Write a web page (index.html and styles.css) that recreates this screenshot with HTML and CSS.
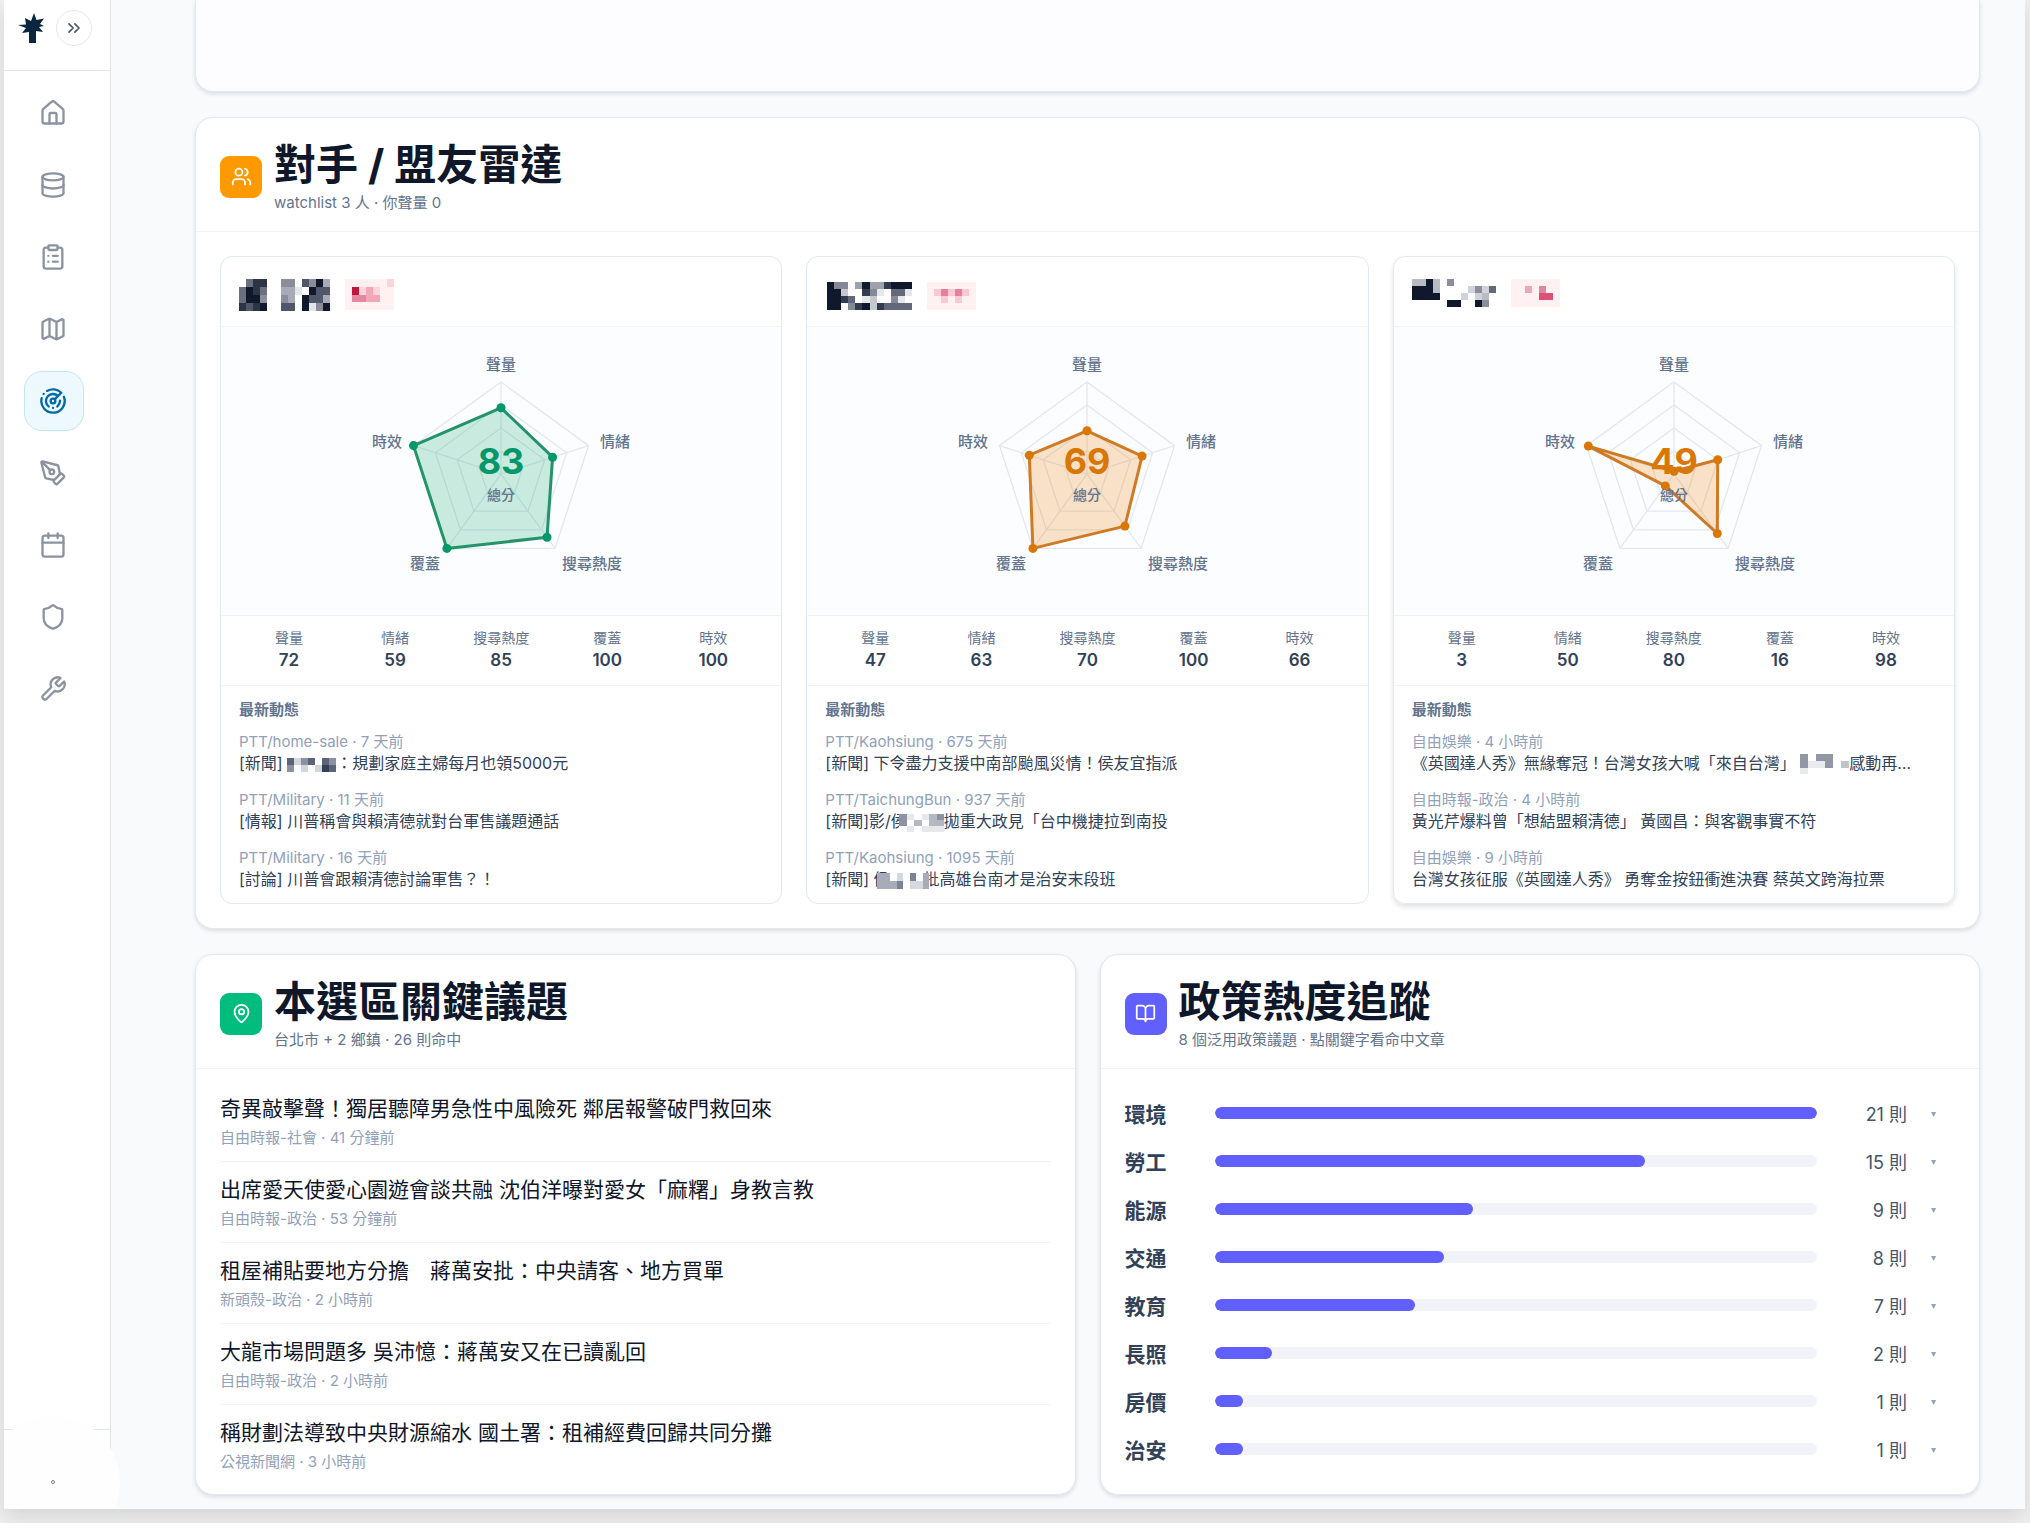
FILE: index.html
```html
<!DOCTYPE html>
<html lang="zh-Hant">

<head>
    <title>選情雷達</title>
    <meta charset="UTF-8">
    <meta name="viewport" content="width=device-width, initial-scale=1">
    <link rel="stylesheet" href="styles.css">
</head>

<body>
    <!-- shared radar grid, drawn around 0,0 with radius 92 -->
    <svg class="defs" width="0" height="0">
        <symbol id="grid" viewBox="-150 -144 300 288" overflow="visible">
            <polygon points="0,-92 87.5,-28.4 54.1,74.4 -54.1,74.4 -87.5,-28.4" />
            <polygon points="0,-69 65.6,-21.3 40.6,55.8 -40.6,55.8 -65.6,-21.3" />
            <polygon points="0,-46 43.7,-14.2 27,37.2 -27,37.2 -43.7,-14.2" />
            <polygon points="0,-23 21.9,-7.1 13.5,18.6 -13.5,18.6 -21.9,-7.1" />
            <path d="M0 0V-92M0 0L87.5-28.4M0 0L54.1 74.4M0 0L-54.1 74.4M0 0L-87.5-28.4" />
        </symbol>
    </svg>

    <div class="window">
        <aside class="sidebar">
            <div class="side-top">
                <svg class="logo" viewBox="0 0 26 30">
                    <path d="M11 30V19L4 20 8 15 0 12 8 11.500 7 5 13 8 16 0 18.500 7 26 5.500 22 11 26 13 21 14 25 19 18 18V30z" />
                </svg>
                <button class="toggle" aria-label="展開">
                    <svg class="icon" viewBox="0 0 24 24"><path d="m6 17 5-5-5-5M13 17l5-5-5-5" /></svg>
                </button>
            </div>
            <nav class="nav">
                <a href="#" class="nav-link" aria-label="首頁">
                    <svg class="icon" viewBox="0 0 24 24"><path d="M15 21v-8a1 1 0 0 0-1-1h-4a1 1 0 0 0-1 1v8" /><path d="M3 10a2 2 0 0 1 .709-1.528l7-6a2 2 0 0 1 2.582 0l7 6A2 2 0 0 1 21 10v9a2 2 0 0 1-2 2H5a2 2 0 0 1-2-2z" /></svg>
                </a>
                <a href="#" class="nav-link" aria-label="資料庫">
                    <svg class="icon" viewBox="0 0 24 24"><ellipse cx="12" cy="5" rx="9" ry="3" /><path d="M3 5v14a9 3 0 0 0 18 0V5" /><path d="M3 12a9 3 0 0 0 18 0" /></svg>
                </a>
                <a href="#" class="nav-link" aria-label="任務">
                    <svg class="icon" viewBox="0 0 24 24"><rect width="8" height="4" x="8" y="2" rx="1" /><path d="M16 4h2a2 2 0 0 1 2 2v14a2 2 0 0 1-2 2H6a2 2 0 0 1-2-2V6a2 2 0 0 1 2-2h2M12 11h4M12 16h4M8 11h.01M8 16h.01" /></svg>
                </a>
                <a href="#" class="nav-link" aria-label="地圖">
                    <svg class="icon" viewBox="0 0 24 24"><path d="M14.106 5.553a2 2 0 0 0 1.788 0l3.659-1.83A1 1 0 0 1 21 4.619v12.764a1 1 0 0 1-.553.894l-4.553 2.277a2 2 0 0 1-1.788 0l-4.212-2.106a2 2 0 0 0-1.788 0l-3.659 1.83A1 1 0 0 1 3 19.381V6.618a1 1 0 0 1 .553-.894l4.553-2.277a2 2 0 0 1 1.788 0zM15 5.764v15M9 3.236v15" /></svg>
                </a>
                <a href="#" class="nav-link active" aria-label="雷達">
                    <svg class="icon" viewBox="0 0 24 24"><path d="M19.07 4.93A10 10 0 0 0 6.99 3.34M4 6h.01M2.29 9.62A10 10 0 1 0 21.31 8.35M16.24 7.76A6 6 0 1 0 8.23 16.67M12 18h.01M17.99 11.66A6 6 0 0 1 15.77 16.67M13.41 10.59l5.66-5.66" /><circle cx="12" cy="12" r="2" /></svg>
                </a>
                <a href="#" class="nav-link" aria-label="文案">
                    <svg class="icon" viewBox="0 0 24 24"><path d="M15.707 21.293a1 1 0 0 1-1.414 0l-1.586-1.586a1 1 0 0 1 0-1.414l5.586-5.586a1 1 0 0 1 1.414 0l1.586 1.586a1 1 0 0 1 0 1.414z" /><path d="m18 13-1.375-6.874a1 1 0 0 0-.746-.776L3.235 2.028a1 1 0 0 0-1.207 1.207L5.35 15.879a1 1 0 0 0 .776.746L13 18M2.3 2.3l7.286 7.286" /><circle cx="11" cy="11" r="2" /></svg>
                </a>
                <a href="#" class="nav-link" aria-label="行程">
                    <svg class="icon" viewBox="0 0 24 24"><path d="M8 2v4M16 2v4M3 10h18" /><rect width="18" height="18" x="3" y="4" rx="2" /></svg>
                </a>
                <a href="#" class="nav-link" aria-label="防護">
                    <svg class="icon" viewBox="0 0 24 24"><path d="M20 13c0 5-3.5 7.5-7.66 8.95a1 1 0 0 1-.67-.01C7.5 20.5 4 18 4 13V6a1 1 0 0 1 1-1c2 0 4.5-1.2 6.24-2.72a1.17 1.17 0 0 1 1.52 0C14.51 3.81 17 5 19 5a1 1 0 0 1 1 1z" /></svg>
                </a>
                <a href="#" class="nav-link" aria-label="工具">
                    <svg class="icon" viewBox="0 0 24 24"><path d="M14.7 6.3a1 1 0 0 0 0 1.4l1.6 1.6a1 1 0 0 0 1.4 0l3.77-3.77a6 6 0 0 1-7.94 7.94l-6.91 6.91a2.12 2.12 0 0 1-3-3l6.91-6.91a6 6 0 0 1 7.94-7.94l-3.76 3.76z" /></svg>
                </a>
            </nav>
            <div class="side-bottom">
                <span class="dot"></span>
            </div>
        </aside>

        <main class="main">
            <section class="card card-prev"></section>

            <section class="card">
                <header class="card-head">
                    <span class="badge orange">
                        <svg class="icon" viewBox="0 0 24 24"><path d="M16 21v-2a4 4 0 0 0-4-4H6a4 4 0 0 0-4 4v2M22 21v-2a4 4 0 0 0-3-3.87M16 3.13a4 4 0 0 1 0 7.75" /><circle cx="9" cy="7" r="4" /></svg>
                    </span>
                    <div>
                        <h2>對手 / 盟友雷達</h2>
                        <p class="sub">watchlist 3 人 · 你聲量 0</p>
                    </div>
                </header>
                <div class="rivals">
                    <article class="rival">
                        <div class="rival-head">
                            <svg class="mosaic" width="91" height="32" viewBox="0 0 13 4" preserveAspectRatio="none">
                                <path fill="#10182c" d="M11 0h1v1h-1zM1 1h1v1h-1zM10 1h1v1h-1zM1 2h2v1h-2zM9 2h1v2h-1zM3 3h1v1h-1zM12 3h1v1h-1z" />
                                <path fill="#2c3446" d="M2 0h2v1h-2zM2 1h1v1h-1zM0 3h1v1h-1zM2 3h1v1h-1z" />
                                <path fill="#50576a" d="M9 0h1v1h-1zM11 1h2v1h-2zM10 2h2v1h-2zM1 3h1v1h-1zM6 3h2v1h-2z" />
                                <path fill="#6b7080" d="M1 0h1v1h-1zM0 1h1v2h-1zM3 1h1v1h-1z" />
                                <path fill="#8b8e9a" d="M6 0h2v1h-2zM10 0h1v1h-1zM3 2h1v1h-1zM6 2h1v1h-1zM11 3h1v1h-1z" />
                                <path fill="#a8abb6" d="M12 0h1v1h-1zM6 1h2v1h-2zM7 2h1v1h-1zM12 2h1v1h-1z" />
                                <path fill="#e4e5ea" d="M8 1h1v1h-1zM10 3h1v1h-1z" />
                            </svg>
                            <svg class="mosaic tag" width="49" height="31" viewBox="0 0 7 4" preserveAspectRatio="none">
                                <path fill="#c0183c" d="M1 1h1v1h-1z" />
                                <path fill="#e288a0" d="M1 2h2v1h-2z" />
                                <path fill="#f2a6b6" d="M3 1h1v2h-1zM4 2h1v1h-1z" />
                                <path fill="#fcd4dc" d="M2 1h1v1h-1zM4 1h1v1h-1zM6 0h1v1h-1z" />
                            </svg>
                        </div>
                        <div class="radar green">
                            <svg width="300" height="288" viewBox="-150 -147 300 288">
                                <use href="#grid" x="-150" y="-144" width="300" height="288" class="grid" />
                                <polygon class="area" points="0,-66.2 51.6,-16.8 46,63.3 -54.1,74.4 -87.5,-28.4" />
                                <g class="dots">
                                    <circle cx="0" cy="-66.2" r="4.5" /><circle cx="51.6" cy="-16.8" r="4.5" /><circle cx="46" cy="63.3" r="4.5" /><circle cx="-54.1" cy="74.4" r="4.5" /><circle cx="-87.5" cy="-28.4" r="4.5" />
                                </g>
                                <g class="axis">
                                    <text x="0" y="-104" text-anchor="middle">聲量</text>
                                    <text x="99" y="-27">情緒</text>
                                    <text x="61" y="95">搜尋熱度</text>
                                    <text x="-61" y="95" text-anchor="end">覆蓋</text>
                                    <text x="-99" y="-27" text-anchor="end">時效</text>
                                </g>
                                <text class="score" x="0" y="0">83</text>
                                <text class="score-label" x="0" y="26">總分</text>
                            </svg>
                        </div>
                        <dl class="stats">
                            <div><dt>聲量</dt><dd>72</dd></div>
                            <div><dt>情緒</dt><dd>59</dd></div>
                            <div><dt>搜尋熱度</dt><dd>85</dd></div>
                            <div><dt>覆蓋</dt><dd>100</dd></div>
                            <div><dt>時效</dt><dd>100</dd></div>
                        </dl>
                        <div class="news">
                            <h3>最新動態</h3>
                            <ul>
                                <li>
                                    <p class="meta">PTT/home-sale · 7 天前</p>
                                    <a href="#">[新聞] <svg class="blur" width="49" height="14" viewBox="0 0 7 2" preserveAspectRatio="none"><path fill="#5b6478" d="M0 0h1v1h-1zM3 0h1v1h-1zM5 0h1v1h-1zM6 1h1v1h-1z" /><path fill="#8a91a0" d="M0 1h1v1h-1zM2 0h1v1h-1zM6 0h1v1h-1z" /><path fill="#d3d6dc" d="M1 0h1v1h-1zM2 1h1v1h-1zM4 1h1v1h-1z" /><path fill="#334158" d="M5 1h1v1h-1z" /></svg>：規劃家庭主婦每月也領5000元</a>
                                </li>
                                <li>
                                    <p class="meta">PTT/Military · 11 天前</p>
                                    <a href="#">[情報] 川普稱會與賴清德就對台軍售議題通話</a>
                                </li>
                                <li>
                                    <p class="meta">PTT/Military · 16 天前</p>
                                    <a href="#">[討論] 川普會跟賴清德討論軍售？！</a>
                                </li>
                            </ul>
                        </div>
                    </article>

                    <article class="rival">
                        <div class="rival-head low">
                            <svg class="mosaic" width="85" height="28" viewBox="0 0 12 4" preserveAspectRatio="none">
                                <path fill="#10182c" d="M0 0h1v4h-1zM5 0h1v1h-1zM9 0h3v1h-3zM1 1h1v3h-1zM5 3h1v1h-1z" />
                                <path fill="#333b4e" d="M8 0h1v1h-1zM5 1h1v1h-1zM2 2h1v1h-1zM4 3h1v1h-1zM7 3h1v1h-1z" />
                                <path fill="#636979" d="M9 1h2v1h-2zM3 2h1v1h-1zM8 3h4v1h-4z" />
                                <path fill="#858995" d="M1 0h2v1h-2zM6 1h1v1h-1zM9 2h1v1h-1zM3 3h1v1h-1z" />
                                <path fill="#9fa2ad" d="M4 0h1v1h-1zM6 0h2v1h-2z" />
                                <path fill="#c6c8d0" d="M2 1h1v1h-1zM6 2h1v2h-1z" />
                                <path fill="#e6e7eb" d="M7 1h1v1h-1zM11 1h1v1h-1zM5 2h1v1h-1zM10 2h1v1h-1z" />
                            </svg>
                            <svg class="mosaic tag" width="49" height="28" viewBox="0 0 7 4" preserveAspectRatio="none">
                                <path fill="#fcc8d6" d="M1 1h5v1h-5zM2 2h1v1h-1zM4 2h1v1h-1z" />
                                <path fill="#e6809f" d="M2 1h1v1h-1zM4 1h1v1h-1z" />
                            </svg>
                        </div>
                        <div class="radar amber">
                            <svg width="300" height="288" viewBox="-150 -147 300 288">
                                <use href="#grid" x="-150" y="-144" width="300" height="288" class="grid" />
                                <polygon class="area" points="0,-43.2 55.1,-17.9 37.9,52.1 -54.1,74.4 -57.7,-18.8" />
                                <g class="dots">
                                    <circle cx="0" cy="-43.2" r="4.5" /><circle cx="55.1" cy="-17.9" r="4.5" /><circle cx="37.9" cy="52.1" r="4.5" /><circle cx="-54.1" cy="74.4" r="4.5" /><circle cx="-57.7" cy="-18.8" r="4.5" />
                                </g>
                                <g class="axis">
                                    <text x="0" y="-104" text-anchor="middle">聲量</text>
                                    <text x="99" y="-27">情緒</text>
                                    <text x="61" y="95">搜尋熱度</text>
                                    <text x="-61" y="95" text-anchor="end">覆蓋</text>
                                    <text x="-99" y="-27" text-anchor="end">時效</text>
                                </g>
                                <text class="score" x="0" y="0">69</text>
                                <text class="score-label" x="0" y="26">總分</text>
                            </svg>
                        </div>
                        <dl class="stats">
                            <div><dt>聲量</dt><dd>47</dd></div>
                            <div><dt>情緒</dt><dd>63</dd></div>
                            <div><dt>搜尋熱度</dt><dd>70</dd></div>
                            <div><dt>覆蓋</dt><dd>100</dd></div>
                            <div><dt>時效</dt><dd>66</dd></div>
                        </dl>
                        <div class="news">
                            <h3>最新動態</h3>
                            <ul>
                                <li>
                                    <p class="meta">PTT/Kaohsiung · 675 天前</p>
                                    <a href="#">[新聞] 下令盡力支援中南部颱風災情！侯友宜指派</a>
                                </li>
                                <li>
                                    <p class="meta">PTT/TaichungBun · 937 天前</p>
                                    <a href="#">[新聞]影/侯<svg class="blur over" width="45" height="18" viewBox="0 0 6 3" preserveAspectRatio="none"><path fill="#fff" d="M0 0h6v3H0z" /><path fill="#8d93a2" d="M0 0h1v2h-1zM5 0h1v1h-1z" /><path fill="#b4b8c2" d="M2 1h1v1h-1zM4 0h1v2h-1zM5 1h1v1h-1z" /><path fill="#e6e8ec" d="M1 0h1v1h-1zM3 0h1v1h-1zM1 2h1v1h-1zM3 2h3v1h-3z" /></svg>拋重大政見「台中機捷拉到南投</a>
                                </li>
                                <li>
                                    <p class="meta">PTT/Kaohsiung · 1095 天前</p>
                                    <a href="#">[新聞] 侯<svg class="blur over-both" width="52" height="16" viewBox="0 0 8 2" preserveAspectRatio="none"><path fill="#fff" d="M0 0h8v2H0z" /><path fill="#a7acb8" d="M0 0h2v2h-2zM2 1h1v1h-1zM7 0h1v2h-1z" /><path fill="#7c8394" d="M3 1h1v1h-1zM5 0h1v1h-1z" /><path fill="#d5d8de" d="M3 0h1v1h-1zM5 1h2v1h-2z" /></svg>批高雄台南才是治安末段班</a>
                                </li>
                            </ul>
                        </div>
                    </article>

                    <article class="rival raised">
                        <div class="rival-head">
                            <svg class="mosaic" width="84" height="28" viewBox="0 0 12 4" preserveAspectRatio="none">
                                <path fill="#10182c" d="M2 0h1v1h-1zM0 1h3v1h-3zM0 2h4v1h-4zM5 3h2v1h-2zM9 3h1v1h-1z" />
                                <path fill="#b8bac4" d="M0 0h2v1h-2zM3 0h1v2h-1zM10 2h1v1h-1z" />
                                <path fill="#8b8e9a" d="M5 0h1v1h-1zM9 1h1v1h-1zM10 3h1v1h-1z" />
                                <path fill="#636979" d="M11 1h1v1h-1z" />
                                <path fill="#d0d2d9" d="M8 1h1v1h-1zM10 1h1v1h-1zM7 2h1v1h-1zM9 2h1v1h-1z" />
                            </svg>
                            <svg class="mosaic tag" width="49" height="28" viewBox="0 0 7 4" preserveAspectRatio="none">
                                <path fill="#e8a8bc" d="M2 1h1v1h-1z" />
                                <path fill="#e086a2" d="M4 1h1v1h-1z" />
                                <path fill="#dc5078" d="M4 2h2v1h-2z" />
                            </svg>
                        </div>
                        <div class="radar amber">
                            <svg width="300" height="288" viewBox="-150 -147 300 288">
                                <use href="#grid" x="-150" y="-144" width="300" height="288" class="grid" />
                                <polygon class="area" points="0,-2.8 43.7,-14.2 43.3,59.5 -8.7,11.9 -85.7,-27.9" />
                                <g class="dots">
                                    <circle cx="0" cy="-2.8" r="4.5" /><circle cx="43.7" cy="-14.2" r="4.5" /><circle cx="43.3" cy="59.5" r="4.5" /><circle cx="-8.7" cy="11.9" r="4.5" /><circle cx="-85.7" cy="-27.9" r="4.5" />
                                </g>
                                <g class="axis">
                                    <text x="0" y="-104" text-anchor="middle">聲量</text>
                                    <text x="99" y="-27">情緒</text>
                                    <text x="61" y="95">搜尋熱度</text>
                                    <text x="-61" y="95" text-anchor="end">覆蓋</text>
                                    <text x="-99" y="-27" text-anchor="end">時效</text>
                                </g>
                                <text class="score" x="0" y="0">49</text>
                                <text class="score-label" x="0" y="26">總分</text>
                            </svg>
                        </div>
                        <dl class="stats">
                            <div><dt>聲量</dt><dd>3</dd></div>
                            <div><dt>情緒</dt><dd>50</dd></div>
                            <div><dt>搜尋熱度</dt><dd>80</dd></div>
                            <div><dt>覆蓋</dt><dd>16</dd></div>
                            <div><dt>時效</dt><dd>98</dd></div>
                        </dl>
                        <div class="news">
                            <h3>最新動態</h3>
                            <ul>
                                <li>
                                    <p class="meta">自由娛樂 · 4 小時前</p>
                                    <a href="#">《英國達人秀》無緣奪冠！台灣女孩大喊「來自台灣」 <svg class="blur" width="49" height="21" viewBox="0 0 6 3" preserveAspectRatio="none"><path fill="#9297a5" d="M0 0h1v2h-1zM2 0h2v1h-2zM3 1h1v1h-1z" /><path fill="#c0c4cc" d="M5 1h1v1h-1z" /><path fill="#e8eaee" d="M0 2h1v1h-1zM1 1h2v1h-2z" /></svg>感動再…</a>
                                </li>
                                <li>
                                    <p class="meta">自由時報-政治 · 4 小時前</p>
                                    <a href="#">黃光芹爆料曾「想結盟賴清德」 黃國昌：與客觀事實不符</a>
                                </li>
                                <li>
                                    <p class="meta">自由娛樂 · 9 小時前</p>
                                    <a href="#">台灣女孩征服《英國達人秀》 勇奪金按鈕衝進決賽 蔡英文跨海拉票</a>
                                </li>
                            </ul>
                        </div>
                    </article>
                </div>
            </section>

            <div class="two-cols">
                <section class="card">
                    <header class="card-head">
                        <span class="badge emerald">
                            <svg class="icon" viewBox="0 0 24 24"><path d="M20 10c0 4.993-5.539 10.193-7.399 11.799a1 1 0 0 1-1.202 0C9.539 20.193 4 14.993 4 10a8 8 0 0 1 16 0" /><circle cx="12" cy="10" r="3" /></svg>
                        </span>
                        <div>
                            <h2>本選區關鍵議題</h2>
                            <p class="sub">台北市 + 2 鄉鎮 · 26 則命中</p>
                        </div>
                    </header>
                    <ul class="issues">
                        <li>
                            <a href="#">奇異敲擊聲！獨居聽障男急性中風險死 鄰居報警破門救回來</a>
                            <p class="meta">自由時報-社會 · 41 分鐘前</p>
                        </li>
                        <li>
                            <a href="#">出席愛天使愛心園遊會談共融 沈伯洋曝對愛女「麻糬」身教言教</a>
                            <p class="meta">自由時報-政治 · 53 分鐘前</p>
                        </li>
                        <li>
                            <a href="#">租屋補貼要地方分擔　蔣萬安批：中央請客、地方買單</a>
                            <p class="meta">新頭殼-政治 · 2 小時前</p>
                        </li>
                        <li>
                            <a href="#">大龍市場問題多 吳沛憶：蔣萬安又在已讀亂回</a>
                            <p class="meta">自由時報-政治 · 2 小時前</p>
                        </li>
                        <li>
                            <a href="#">稱財劃法導致中央財源縮水 國土署：租補經費回歸共同分攤</a>
                            <p class="meta">公視新聞網 · 3 小時前</p>
                        </li>
                    </ul>
                </section>

                <section class="card">
                    <header class="card-head">
                        <span class="badge indigo">
                            <svg class="icon" viewBox="0 0 24 24"><path d="M12 7v14M3 18a1 1 0 0 1-1-1V4a1 1 0 0 1 1-1h5a4 4 0 0 1 4 4 4 4 0 0 1 4-4h5a1 1 0 0 1 1 1v13a1 1 0 0 1-1 1h-6a3 3 0 0 0-3 3 3 3 0 0 0-3-3z" /></svg>
                        </span>
                        <div>
                            <h2>政策熱度追蹤</h2>
                            <p class="sub">8 個泛用政策議題 · 點關鍵字看命中文章</p>
                        </div>
                    </header>
                    <div class="policies">
                        <button class="policy"><b>環境</b><span class="track"><span class="fill" style="width: 100%"></span></span><span class="count">21 則</span><span class="arrow">▾</span></button>
                        <button class="policy"><b>勞工</b><span class="track"><span class="fill" style="width: 71.4%"></span></span><span class="count">15 則</span><span class="arrow">▾</span></button>
                        <button class="policy"><b>能源</b><span class="track"><span class="fill" style="width: 42.9%"></span></span><span class="count">9 則</span><span class="arrow">▾</span></button>
                        <button class="policy"><b>交通</b><span class="track"><span class="fill" style="width: 38.1%"></span></span><span class="count">8 則</span><span class="arrow">▾</span></button>
                        <button class="policy"><b>教育</b><span class="track"><span class="fill" style="width: 33.3%"></span></span><span class="count">7 則</span><span class="arrow">▾</span></button>
                        <button class="policy"><b>長照</b><span class="track"><span class="fill" style="width: 9.5%"></span></span><span class="count">2 則</span><span class="arrow">▾</span></button>
                        <button class="policy"><b>房價</b><span class="track"><span class="fill" style="width: 4.8%"></span></span><span class="count">1 則</span><span class="arrow">▾</span></button>
                        <button class="policy"><b>治安</b><span class="track"><span class="fill" style="width: 4.8%"></span></span><span class="count">1 則</span><span class="arrow">▾</span></button>
                    </div>
                </section>
            </div>
        </main>
    </div>
</body>

</html>
```

FILE: styles.css
```css
* {
    box-sizing: border-box;
    padding: 0;
    margin: 0;
}

body {
    background-color: #f0f0f0;
    color: #0f172b;
    font-family: Inter, "Noto Sans CJK TC", sans-serif;
    font-size: 16px;
}

ul {
    list-style: none;
}

a {
    color: inherit;
    text-decoration: none;
}

button {
    font-family: inherit;
    cursor: pointer;
}

.defs {
    position: absolute;
}

.icon {
    display: block;
    width: 28px;
    height: 28px;
    fill: none;
    stroke: currentColor;
    stroke-width: 2;
    stroke-linecap: round;
    stroke-linejoin: round;
}

.window {
    display: flex;
    margin: 0 5px 14px 4px;
    background-color: #f8fafc;
    box-shadow: 0 8px 20px rgba(0, 0, 0, 0.12);
}

/* sidebar */
.sidebar {
    display: flex;
    flex-direction: column;
    flex-shrink: 0;
    width: 107px;
    position: relative;
    background-color: #fff;
    border-right: 1px solid #e2e5ea;
    clip-path: inset(0 -20px 0 0);
}

.side-top {
    display: flex;
    align-items: center;
    gap: 12px;
    padding: 10px 14px 24px;
    border-bottom: 1px solid #e2e5ea;
}

.logo {
    width: 26px;
    height: 30px;
    fill: #0a2540;
}

.toggle {
    display: flex;
    align-items: center;
    justify-content: center;
    width: 36px;
    height: 36px;
    background-color: #fff;
    border: 1px solid #e5e7eb;
    border-radius: 50%;
    color: #4a5565;
}

.toggle .icon {
    width: 20px;
    height: 20px;
}

.nav {
    display: flex;
    flex-direction: column;
    gap: 12px;
    padding: 12px 20px;
}

.nav-link {
    display: flex;
    align-items: center;
    justify-content: center;
    width: 60px;
    height: 60px;
    padding-right: 2px;
    border: 1px solid transparent;
    border-radius: 18px;
    color: #8b93a1;
}

.nav-link.active {
    background-color: #eef9ff;
    border-color: #c3e6f3;
    color: #0069a8;
}

.side-bottom {
    position: relative;
    height: 80px;
    margin-top: auto;
    border-top: 1px solid #e2e5ea;
}

/* round avatar glow that spills over the sidebar edge */
.side-bottom::before {
    content: "";
    position: absolute;
    left: -18px;
    top: -14px;
    width: 134px;
    height: 134px;
    border-radius: 50%;
    background-color: #fefefe;
}

.dot {
    position: absolute;
    left: 47px;
    top: 50px;
    width: 4px;
    height: 4px;
    border-radius: 50%;
    border: 1px solid #7d828a;
}

/* content */
.main {
    flex: 1;
    min-width: 0;
    display: flex;
    flex-direction: column;
    gap: 25px;
    padding: 0 45px 14px 84px;
}

.card {
    background-color: #fff;
    border: 1px solid #e2e8f0;
    border-radius: 18px;
    box-shadow: 0 2px 4px rgba(15, 23, 42, 0.12);
}

.card-prev {
    height: 92px;
    border-top: 0;
    border-radius: 0 0 18px 18px;
    background-color: #fdfdff;
}

.card-head {
    display: flex;
    align-items: center;
    gap: 12px;
    padding: 22px 24px 18px;
    border-bottom: 1px solid #f1f3f7;
}

.badge {
    display: flex;
    align-items: center;
    justify-content: center;
    width: 42px;
    height: 42px;
    border-radius: 9px;
    color: #fff;
}

.badge .icon {
    width: 21px;
    height: 21px;
}

.orange {
    background-color: #fe9a00;
}

.emerald {
    background-color: #00bc7d;
}

.indigo {
    background-color: #615fff;
}

h2 {
    font-size: 42px;
    line-height: 50px;
    font-weight: 700;
}

.sub {
    margin-top: 3px;
    font-size: 15px;
    line-height: 20px;
    color: #62748e;
}

.meta {
    font-size: 15px;
    line-height: 20px;
    color: #90a1b9;
}

/* rival cards */
.rivals {
    display: grid;
    grid-template-columns: repeat(3, minmax(0, 1fr));
    gap: 24px;
    padding: 24px;
}

.rival {
    border: 1px solid #e2e8f0;
    border-radius: 12px;
    overflow: hidden;
}

.raised {
    box-shadow: 0 3px 5px rgba(15, 23, 42, 0.12);
}

.rival-head {
    display: flex;
    align-items: flex-start;
    gap: 15px;
    height: 70px;
    padding: 22px 18px 0;
    border-bottom: 1px solid #f1f3f7;
}

.rival-head.low {
    padding-top: 25px;
    padding-left: 20px;
}

.mosaic {
    display: block;
    shape-rendering: crispEdges;
}

.tag {
    background-color: #fff0f1;
}

.radar {
    display: flex;
    justify-content: center;
    background-color: #fcfdff;
    border-bottom: 1px solid #f1f3f7;
}

.grid {
    fill: none;
    stroke: #e2e8f0;
    stroke-width: 1.3;
}

.area {
    fill-opacity: 0.2;
    stroke-width: 3;
    stroke-linejoin: round;
}

.green .area {
    fill: #00a55f;
    stroke: #239369;
}

.green .dots,
.green .score {
    fill: #059669;
}

.amber .area {
    fill: #f08c10;
    fill-opacity: 0.24;
    stroke: #cf7a24;
}

.amber .dots,
.amber .score {
    fill: #d97706;
}

.axis {
    fill: #62748e;
    font-size: 15px;
    font-weight: 500;
}

.score {
    font-size: 36px;
    font-weight: 700;
    text-anchor: middle;
}

.score-label {
    fill: #62748e;
    font-size: 14px;
    font-weight: 500;
    text-anchor: middle;
}

.stats {
    display: grid;
    grid-template-columns: repeat(5, 1fr);
    padding: 12px 15px 13px;
    border-bottom: 1px solid #f1f3f7;
    text-align: center;
}

.stats dt {
    font-size: 14px;
    line-height: 20px;
    color: #62748e;
}

.stats dd {
    font-size: 17px;
    line-height: 24px;
    font-weight: 600;
    color: #314158;
}

.news {
    padding: 14px 18px 13px;
}

.news h3 {
    margin-bottom: 12px;
    font-size: 15px;
    line-height: 20px;
    font-weight: 600;
    color: #62748e;
}

.news ul {
    display: flex;
    flex-direction: column;
    gap: 16px;
}

.news a {
    display: block;
    height: 22px;
    overflow: hidden;
    font-size: 16px;
    line-height: 22px;
    white-space: nowrap;
    color: #314158;
}

.blur {
    shape-rendering: crispEdges;
    vertical-align: middle;
}

.over {
    position: relative;
    margin-left: -8px;
}

.over-both {
    position: relative;
    margin-left: -13px;
    margin-right: -5px;
}

/* bottom row */
.two-cols {
    display: grid;
    grid-template-columns: repeat(2, minmax(0, 1fr));
    gap: 24px;
}

.issues {
    padding: 12px 24px 8px;
}

.issues li {
    padding: 13px 0;
    border-bottom: 1px solid #f1f3f7;
}

.issues li:last-child {
    border-bottom: 0;
}

.issues a {
    display: block;
    margin-bottom: 4px;
    font-size: 21px;
    line-height: 30px;
}

.policies {
    padding: 20px 24px 21px;
}

.policy {
    display: grid;
    grid-template-columns: 66px 1fr 66px 24px;
    align-items: center;
    gap: 24px;
    width: 100%;
    height: 48px;
    background: none;
    border: 0;
    text-align: left;
}

.policy b {
    font-size: 21px;
    font-weight: 600;
    color: #314158;
}

.track {
    height: 12px;
    border-radius: 6px;
    background-color: #f1f3f9;
    overflow: hidden;
}

.fill {
    display: block;
    height: 12px;
    border-radius: 6px;
    background-color: #615fff;
}

.count {
    font-size: 18px;
    text-align: right;
    color: #45556c;
}

.arrow {
    font-size: 10px;
    color: #90a1b9;
}
```
